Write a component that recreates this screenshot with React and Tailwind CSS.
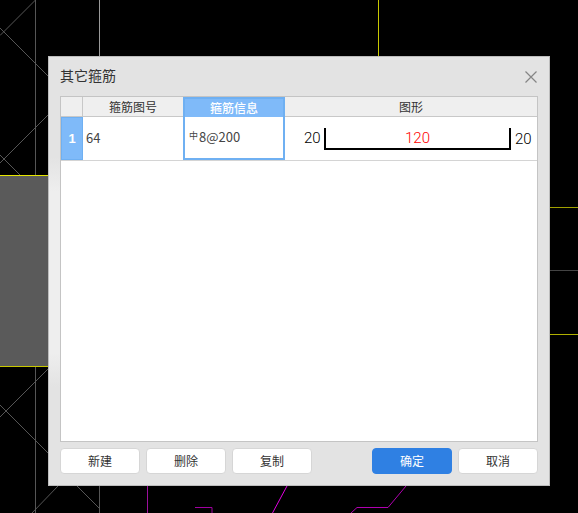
import React from "react";

const cjk = "font-['Microsoft_YaHei','Noto_Sans_CJK_SC',sans-serif]";

const GRAY_LINES = [
  "M35.5 0V175",
  "M35.5 367V513",
  "M35.5 0L0 35.5",
  "M0 28L48 76",
  "M48 115L0 163",
  "M0 155L20 175",
  "M48 369L0 417",
  "M0 405L48 453",
  "M58 486L32 513",
  "M77 486L99 508",
  "M99.5 486V513",
];

const CadBackground = () => (
  <svg className="absolute inset-0" width="578" height="513" fill="none">
    <rect x="0" y="176" width="48" height="190" fill="#5a5a5a" />
    {GRAY_LINES.map((d, index) => (
      <path key={index} d={d} stroke="#606060" strokeWidth="0.9" />
    ))}
    <path d="M99.5 0V56" stroke="#9a9a9a" />
    <path d="M378.5 0V56" stroke="#c8c800" />
    <path d="M0 175.5H48" stroke="#e6e600" />
    <path d="M0 366.5H48" stroke="#c8c800" />
    <path d="M550 207.5H578" stroke="#a0a000" />
    <path d="M550 270.5H578" stroke="#444444" />
    <path d="M550 334.5H578" stroke="#b0b000" />
    <path d="M147.5 486V513" stroke="#9c0f9c" />
    <path d="M195 507.5H212V513" stroke="#a000a0" />
    <path d="M287 486L272.5 513" stroke="#e000e0" />
    <path d="M406 486L388 507.5H357L351 513" stroke="#b000b0" />
  </svg>
);

const HeaderCell = ({ children, active, className = "" }) => (
  <div
    className={`flex items-center justify-center text-[12px] ${
      active
        ? "border-x-2 border-t-2 border-[#6fb0f2] bg-[#7fbaf9] font-medium text-white"
        : "border-b border-[#c8c8c8] bg-[#efefef] text-[#333333]"
    } ${className}`}
  >
    {children}
  </div>
);

const FootButton = ({ children, primary, className = "" }) => (
  <button
    className={`flex h-[26px] w-[80px] items-center justify-center rounded-[4px] border text-[12px] ${
      primary
        ? "border-[#2f80e3] bg-[#2f80e3] text-white"
        : "border-[#d6d6d6] bg-white text-[#333333]"
    } ${className}`}
  >
    {children}
  </button>
);

const App = () => {
  return (
    <div className={`relative h-[513px] w-[578px] overflow-hidden bg-black pl-[48px] pt-[56px] ${cjk}`}>
      <CadBackground />
      <div className="relative flex h-[430px] w-[502px] flex-col border border-[#bdbdbd] bg-[#e3e3e3] px-[11px]">
        <div className="absolute left-0 top-[100px] h-[230px] w-[11px] bg-[linear-gradient(to_bottom,#e3e3e3,#eeeeee_15%,#eeeeee_85%,#e3e3e3)]" />
        <div className="flex h-[39px] shrink-0 items-center justify-between pb-[2px]">
          <div className="text-[14px] text-[#333333]">其它箍筋</div>
          <svg width="12" height="12" viewBox="0 0 12 12" className="mr-[1px] mt-[2px]" stroke="#858585" strokeWidth="1.2" fill="none">
            <path d="M0.5 0.5L11.5 11.5M11.5 0.5L0.5 11.5" />
          </svg>
        </div>

        <div className="relative flex h-[346px] w-[478px] flex-col border border-[#c4c4c4] bg-white">
          <div className="grid h-[20px] grid-cols-[22px_100px_102px_1fr]">
            <HeaderCell className="border-r border-[#c8c8c8]" />
            <HeaderCell>箍筋图号</HeaderCell>
            <HeaderCell active>箍筋信息</HeaderCell>
            <HeaderCell>图形</HeaderCell>
          </div>
          <div className="grid h-[44px] grid-cols-[22px_100px_102px_1fr] border-b border-[#d4d4d4]">
            <div className="flex items-center justify-center border border-[#6fb0f2] bg-[#7fbaf9] font-['Liberation_Sans',sans-serif] text-[13px] font-bold text-white">
              1
            </div>
            <div className="flex items-center pb-[2px] pl-[3px] text-[13px] text-[#444444]">64</div>
            <div className="flex items-center border-2 border-t-0 border-[#6fb0f2] pb-[1px] pl-[4px] text-[13px] text-[#444444]">
              <span className="mb-[3px] mr-[1px] text-[9px]">中</span>8@200
            </div>
            <div className="flex items-start pl-[19px] pt-[11px] font-['Roboto',sans-serif] text-[15px] font-light leading-[16px] text-black">
              <span className="mt-[2px] w-[20px]">20</span>
              <div className="flex h-[22px] w-[187px] justify-center border-x-2 border-b-2 border-black pt-[2px] text-[#ff0000]">
                120
              </div>
              <span className="ml-[4px] mt-[3px]">20</span>
            </div>
          </div>
        </div>

        <div className="mt-[6px] flex">
          <FootButton>新建</FootButton>
          <FootButton className="ml-[6px]">删除</FootButton>
          <FootButton className="ml-[6px]">复制</FootButton>
          <FootButton primary className="ml-[60px]">确定</FootButton>
          <FootButton className="ml-[6px]">取消</FootButton>
        </div>
      </div>
    </div>
  );
};

export default App;
